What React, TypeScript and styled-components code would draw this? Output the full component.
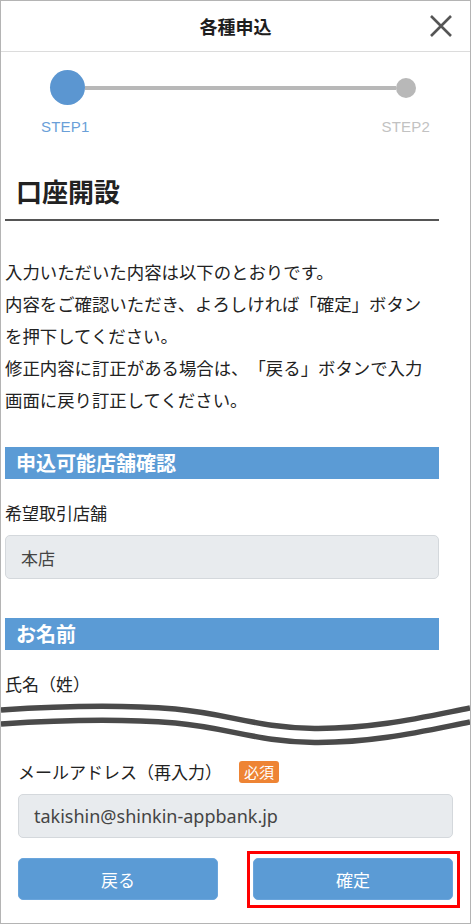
import styled, { createGlobalStyle } from "styled-components";

const GlobalStyle = createGlobalStyle`
  html, body {
    margin: 0;
    padding: 0;
    background: #fff;
  }
  body {
    font-family: "Noto Sans CJK JP", "Noto Sans", sans-serif;
    color: #222;
    text-spacing-trim: space-all;
  }
  * {
    box-sizing: border-box;
  }
`;

export default function App() {
  return (
    <>
      <GlobalStyle />
      <StyledFrame>
        <StyledHeader>
          <h1>各種申込</h1>
          <CloseButton aria-label="閉じる">
            <svg width="24" height="24" viewBox="0 0 24 24">
              <path d="M2 2 L22 22 M22 2 L2 22" stroke="#555" strokeWidth="2.6" strokeLinecap="butt" />
            </svg>
          </CloseButton>
        </StyledHeader>

        <StyledStepper>
          <div className="step-track">
            <StepDot active />
            <div className="step-line" />
            <StepDot />
          </div>
          <div className="step-labels">
            <StepLabel active>STEP1</StepLabel>
            <StepLabel>STEP2</StepLabel>
          </div>
        </StyledStepper>

        <StyledContent>
          <PageTitle>口座開設</PageTitle>
          <Lead>
            入力いただいた内容は以下のとおりです。<br />
            内容をご確認いただき、よろしければ「確定」ボタン<br />
            を押下してください。<br />
            修正内容に訂正がある場合は、「戻る」ボタンで入力<br />
            画面に戻り訂正してください。
          </Lead>

          <SectionBar>申込可能店舗確認</SectionBar>
          <FieldLabel>希望取引店舗</FieldLabel>
          <ReadonlyField>本店</ReadonlyField>

          <SectionBar gap={39}>お名前</SectionBar>
          <FieldLabel>氏名（姓）</FieldLabel>
        </StyledContent>

        {/* 省略マーク */}
        <BreakMark viewBox="0 0 471 48" preserveAspectRatio="none">
          <path d="M0,12 C60,8 125,7 175,11 C230,16 258,30 315,30.5 C375,31 425,19 471,10" />
          <path d="M0,26 C60,22 125,21 175,25 C230,30 258,44 315,44.5 C375,45 425,33 471,24" />
        </BreakMark>

        <StyledBottom>
          <FieldLabel>
            メールアドレス（再入力）
            <RequiredBadge>必須</RequiredBadge>
          </FieldLabel>
          <ReadonlyField latin>takishin@shinkin-appbank.jp</ReadonlyField>

          <div className="button-row">
            <ActionButton>戻る</ActionButton>
            <Highlight>
              <ActionButton>確定</ActionButton>
            </Highlight>
          </div>
        </StyledBottom>
      </StyledFrame>
    </>
  );
}

const StyledFrame = styled.div`
  width: 471px;
  height: 924px;
  border: 1px solid #b4b4b4;
  display: flex;
  flex-direction: column;
  overflow: hidden;
  background: #fff;
`;

const StyledHeader = styled.header`
  position: relative;
  height: 51px;
  flex-shrink: 0;
  border-bottom: 1px solid #dcdcdc;
  display: flex;
  align-items: center;
  justify-content: center;
  h1 {
    margin: 0;
    font-size: 18px;
    font-weight: 700;
    line-height: 24px;
    color: #1e1e1e;
  }
`;

const CloseButton = styled.button`
  position: absolute;
  right: 17px;
  top: 13px;
  width: 24px;
  height: 24px;
  padding: 0;
  border: none;
  background: none;
  display: flex;
`;

const StyledStepper = styled.div`
  padding-top: 18px;
  .step-track {
    display: flex;
    align-items: center;
    padding: 0 54px 0 49px;
    height: 35px;
  }
  .step-line {
    flex: 1;
    height: 4px;
    background: #b8b8b8;
  }
  .step-labels {
    display: flex;
    justify-content: space-between;
    padding: 0 40px 0 40px;
    margin-top: 14px;
  }
`;

const StepDot = styled.div<{ active?: boolean }>`
  width: ${props => props.active ? '35px' : '20px'};
  height: ${props => props.active ? '35px' : '20px'};
  border-radius: 50%;
  flex-shrink: 0;
  background: ${props => props.active ? '#5b96d1' : '#b8b8b8'};
`;

const StepLabel = styled.span<{ active?: boolean }>`
  font-family: "Liberation Sans", Arial, sans-serif;
  font-size: 15px;
  line-height: 16px;
  letter-spacing: 0.2px;
  color: ${props => props.active ? '#6a9fd8' : '#c2c2c2'};
`;

const StyledContent = styled.main`
  padding: 0 31px 0 4px;
`;

const PageTitle = styled.h2`
  margin: 38px 0 0;
  padding: 0 0 10px 11px;
  font-size: 26px;
  line-height: 36px;
  font-weight: 700;
  color: #222;
  border-bottom: 2px solid #555;
`;

const Lead = styled.p`
  margin: 35px 0 0;
  font-size: 17.4px;
  line-height: 32px;
  color: #222;
  white-space: nowrap;
`;

const SectionBar = styled.h3<{ gap?: number }>`
  margin: ${props => props.gap ?? 31}px 0 0;
  height: 32px;
  padding-left: 11px;
  background: #5b9bd5;
  color: #fff;
  font-size: 20px;
  font-weight: 700;
  line-height: 32px;
`;

const FieldLabel = styled.div`
  display: flex;
  align-items: center;
  margin-top: 22px;
  font-size: 17px;
  line-height: 24px;
  color: #222;
`;

const RequiredBadge = styled.span`
  margin-left: 17px;
  padding: 0 5px;
  height: 22px;
  border-radius: 3px;
  background: #ee8434;
  color: #fff;
  font-size: 15px;
  line-height: 22px;
`;

const ReadonlyField = styled.div<{ latin?: boolean }>`
  margin-top: 10px;
  height: 44px;
  padding: 0 15px;
  display: flex;
  align-items: center;
  background: #e8ebee;
  border: 1px solid #d4d8dc;
  border-radius: 5px;
  color: #444;
  font-family: ${props => props.latin ? '"Noto Sans", "Open Sans", sans-serif' : 'inherit'};
  font-size: ${props => props.latin ? '18px' : '17px'};
`;

const BreakMark = styled.svg`
  display: block;
  width: 100%;
  height: 48px;
  margin-top: 2px;
  flex-shrink: 0;
  path {
    fill: none;
    stroke: #4a4a4a;
    stroke-width: 5.5;
  }
`;

const StyledBottom = styled.section`
  padding: 0 17px;
  ${FieldLabel} {
    margin-top: 14px;
  }
  .button-row {
    display: grid;
    grid-template-columns: 1fr 1fr;
    column-gap: 35px;
    margin-top: 20px;
  }
`;

const ActionButton = styled.button`
  width: 100%;
  height: 42px;
  border: 1px solid #6aa5dc;
  border-radius: 5px;
  background: #5b9bd5;
  color: #fff;
  font-family: "Noto Sans CJK JP", sans-serif;
  font-size: 17px;
  cursor: pointer;
`;

const Highlight = styled.div`
  position: relative;
  &::after {
    content: '';
    position: absolute;
    inset: -7px -7px -8px -6px;
    border: 3px solid #f00;
    pointer-events: none;
  }
`;
